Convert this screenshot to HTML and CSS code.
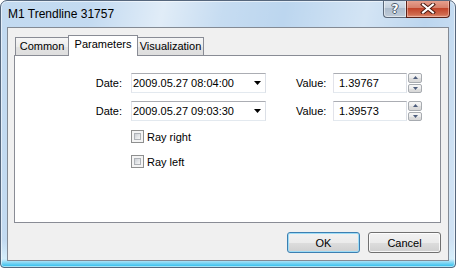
FILE: index.html
```html
<!DOCTYPE html>
<html lang="en">
<head>
  <meta charset="UTF-8" />
  <title>M1 Trendline 31757</title>
  <link rel="stylesheet" href="styles.css">
</head>
<body>
  <div class="window">
    <div class="titlebar">
      <span class="title">M1 Trendline 31757</span>
      <div class="caption-buttons">
        <span class="cap-btn help">?</span>
        <span class="cap-btn close">
          <svg width="16" height="11" viewBox="0 0 16 11">
            <path d="M3 1.5 L13 9.5 M13 1.5 L3 9.5" stroke="#4a1a12" stroke-width="4" stroke-linecap="square" fill="none"/>
            <path d="M3 1.5 L13 9.5 M13 1.5 L3 9.5" stroke="#fff" stroke-width="2" stroke-linecap="square" fill="none"/>
          </svg>
        </span>
      </div>
    </div>

    <div class="client">
      <div class="tabs">
        <span class="tab tab-common">Common</span>
        <span class="tab tab-params active">Parameters</span>
        <span class="tab tab-visual">Visualization</span>
      </div>

      <div class="panel">
        <div class="field-row">
          <span class="field-label">Date:</span>
          <div class="combo">
            <span>2009.05.27 08:04:00</span>
            <svg class="arrow" width="7" height="4" viewBox="0 0 7 4"><path d="M0 0 H7 L3.5 4 Z" fill="#000"/></svg>
          </div>
          <span class="value-label">Value:</span>
          <div class="value-box">1.39767</div>
          <div class="spin">
            <span class="spin-btn"><svg width="5" height="3" viewBox="0 0 5 3"><path d="M0 3 H5 L2.5 0 Z" fill="#4d5d7c"/></svg></span>
            <span class="spin-btn"><svg width="5" height="3" viewBox="0 0 5 3"><path d="M0 0 H5 L2.5 3 Z" fill="#4d5d7c"/></svg></span>
          </div>
        </div>

        <div class="field-row second">
          <span class="field-label">Date:</span>
          <div class="combo">
            <span>2009.05.27 09:03:30</span>
            <svg class="arrow" width="7" height="4" viewBox="0 0 7 4"><path d="M0 0 H7 L3.5 4 Z" fill="#000"/></svg>
          </div>
          <span class="value-label">Value:</span>
          <div class="value-box">1.39573</div>
          <div class="spin">
            <span class="spin-btn"><svg width="5" height="3" viewBox="0 0 5 3"><path d="M0 3 H5 L2.5 0 Z" fill="#4d5d7c"/></svg></span>
            <span class="spin-btn"><svg width="5" height="3" viewBox="0 0 5 3"><path d="M0 0 H5 L2.5 3 Z" fill="#4d5d7c"/></svg></span>
          </div>
        </div>

        <label class="check-row first">
          <span class="check"><span class="check-inner"></span></span>
          Ray right
        </label>
        <label class="check-row">
          <span class="check"><span class="check-inner"></span></span>
          Ray left
        </label>
      </div>

      <div class="actions">
        <button class="btn default">OK</button>
        <button class="btn">Cancel</button>
      </div>
    </div>
  </div>
</body>
</html>
```

FILE: styles.css
```css
body {
  margin: 0;
  font-family: "Liberation Sans", Arial, sans-serif;
  font-size: 11px;
  color: #000;
  background: #fff;
}

.window {
  width: 456px;
  height: 268px;
  box-sizing: border-box;
  border: 1px solid #56677d;
  border-radius: 7px 7px 4px 4px;
  box-shadow: inset 0 0 0 1px rgba(255, 255, 255, 0.55);
  background:
    linear-gradient(180deg, rgba(255, 255, 255, 0) 90%, rgba(215, 240, 252, 0.9) 97%, #3cc2ee 99.6%),
    linear-gradient(102deg, rgba(255, 255, 255, 0.1) 18%, rgba(255, 255, 255, 0.55) 32%, rgba(255, 255, 255, 0.15) 44%, rgba(255, 255, 255, 0) 56%, rgba(255, 255, 255, 0.35) 72%, rgba(255, 255, 255, 0) 84%, rgba(255, 255, 255, 0.3) 96%),
    #bcd6ef;
  display: flex;
  flex-direction: column;
  overflow: hidden;
}

.titlebar {
  height: 26px;
  display: flex;
  align-items: flex-start;
}

.title {
  font-size: 12px;
  line-height: 26px;
  padding-left: 7px;
}

.caption-buttons {
  margin-left: auto;
  margin-right: 5px;
  margin-top: -1px;
  display: flex;
}

.cap-btn {
  height: 18px;
  box-sizing: border-box;
  border: 1px solid #5b6879;
  border-top: none;
  display: flex;
  align-items: center;
  justify-content: center;
}

.help {
  width: 23px;
  border-right: none;
  border-radius: 0 0 0 4px;
  background: linear-gradient(180deg, #d9e3ee 0%, #c6d2df 45%, #adbccd 50%, #bfcbd8 100%);
  box-shadow: inset 0 0 0 1px rgba(255, 255, 255, 0.5);
  color: #fff;
  font-family: "DejaVu Sans", sans-serif;
  font-size: 12px;
  font-weight: bold;
  text-shadow: 1px 0 #4b5a6c, -1px 0 #4b5a6c, 0 1px #4b5a6c, 0 -1px #4b5a6c;
}

.close {
  width: 44px;
  border-radius: 0 0 4px 0;
  border-color: #5a2218;
  background: linear-gradient(180deg, #e8a493 0%, #d7806b 45%, #c2442a 50%, #cf6a4e 85%, #e0937a 100%);
  box-shadow: inset 0 0 0 1px rgba(255, 220, 210, 0.45);
}

.client {
  margin: 0 6px;
  height: 234px;
  box-sizing: border-box;
  border: 1px solid #838a94;
  background: #f0f0f0;
  display: flex;
  flex-direction: column;
}

.tabs {
  display: flex;
  align-items: flex-end;
  height: 20px;
  margin-top: 7px;
  padding-left: 7px;
  position: relative;
  z-index: 1;
}

.tab {
  height: 18px;
  box-sizing: border-box;
  border: 1px solid #898c95;
  border-bottom: none;
  background: linear-gradient(180deg, #f6f6f6 0%, #ececec 50%, #e2e2e2 51%, #dedede 100%);
  text-align: center;
  line-height: 17px;
}

.tab-common {
  width: 53px;
  border-right: none;
}

.tab-params {
  width: 70px;
}

.tab-visual {
  width: 66px;
  border-left: none;
}

.tab.active {
  height: 21px;
  margin-bottom: -1px;
  background: #fff;
  line-height: 17px;
}

.panel {
  margin: 0 7px 0 6px;
  height: 168px;
  box-sizing: border-box;
  border: 1px solid #898c95;
  background: #fff;
  padding-top: 17px;
}

.field-row {
  display: flex;
  align-items: center;
  height: 20px;
  padding-left: 73px;
}

.field-row.second {
  margin-top: 8px;
}

.field-label {
  width: 34px;
  text-align: right;
  margin-right: 9px;
}

.combo,
.value-box {
  height: 20px;
  box-sizing: border-box;
  border: 1px solid;
  border-color: #abadb3 #dbdfe6 #e3e9ef #e2e3ea;
  display: flex;
  align-items: center;
}

.combo {
  width: 135px;
  padding: 0 4px 0 1px;
  justify-content: space-between;
}

.value-label {
  width: 31px;
  margin-left: 30px;
  margin-right: 6px;
}

.value-box {
  width: 74px;
  padding-left: 5px;
}

.spin {
  margin-left: 1px;
  width: 14px;
  height: 20px;
  display: flex;
  flex-direction: column;
  gap: 1px;
}

.spin-btn {
  flex: 1;
  box-sizing: border-box;
  border: 1px solid #a7abb0;
  border-radius: 2px;
  background: linear-gradient(180deg, #f7f7f7 0%, #ececec 50%, #dfdfdf 51%, #d8d8d8 100%);
  display: flex;
  align-items: center;
  justify-content: center;
}

.check-row {
  display: flex;
  align-items: center;
  height: 13px;
  padding-left: 116px;
  margin-top: 12px;
}

.check-row.first {
  margin-top: 9px;
}

.check {
  width: 13px;
  height: 13px;
  box-sizing: border-box;
  border: 1px solid #8e8f8f;
  background: #f4f4f4;
  padding: 2px;
  margin-right: 3px;
}

.check-inner {
  display: block;
  width: 7px;
  height: 7px;
  box-sizing: border-box;
  border: 1px solid #aeb2b7;
  background: linear-gradient(135deg, #cbcfd5 0%, #e6e8ea 60%, #f6f6f6 100%);
}

.actions {
  display: flex;
  justify-content: flex-end;
  gap: 8px;
  margin-top: 9px;
  padding-right: 7px;
}

.btn {
  width: 73px;
  height: 21px;
  box-sizing: border-box;
  border: 1px solid #707070;
  border-radius: 3px;
  background: linear-gradient(180deg, #f2f2f2 0%, #ebebeb 50%, #dddddd 51%, #cfcfcf 100%);
  box-shadow: inset 0 0 0 1px rgba(255, 255, 255, 0.8);
  font-family: inherit;
  font-size: 11px;
  color: #000;
  padding: 0;
}

.btn.default {
  border-color: #3c7fb1;
  box-shadow: inset 0 0 0 1px #9edcf6;
}
```
